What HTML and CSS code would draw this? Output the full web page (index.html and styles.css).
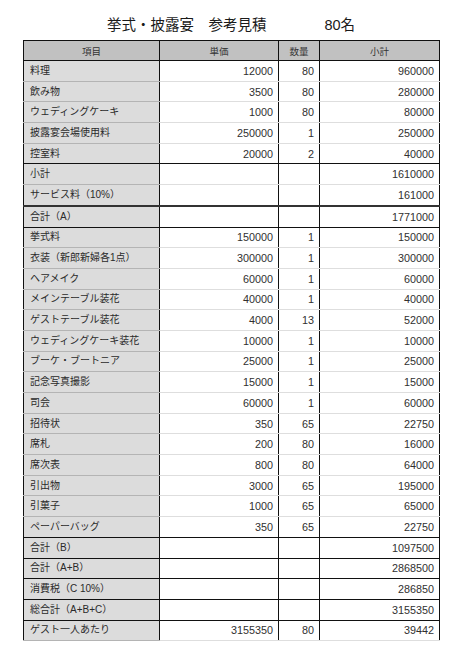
FILE: index.html
```html
<!DOCTYPE html>
<html lang="ja">
<head>
<meta charset="utf-8">
<title>挙式・披露宴 参考見積</title>
<link rel="stylesheet" href="styles.css">
</head>
<body>
<div class="page">
  <h1 class="title"><span>挙式・披露宴　参考見積</span><span class="count">80名</span></h1>
  <table class="est">
    <colgroup>
      <col class="c-item"><col class="c-price"><col class="c-qty"><col class="c-sub">
    </colgroup>
    <thead>
      <tr><th>項目</th><th>単価</th><th>数量</th><th>小計</th></tr>
    </thead>
    <tbody>
      <tr><td class="item">料理</td><td class="num">12000</td><td class="num">80</td><td class="num">960000</td></tr>
      <tr><td class="item">飲み物</td><td class="num">3500</td><td class="num">80</td><td class="num">280000</td></tr>
      <tr><td class="item">ウェディングケーキ</td><td class="num">1000</td><td class="num">80</td><td class="num">80000</td></tr>
      <tr><td class="item">披露宴会場使用料</td><td class="num">250000</td><td class="num">1</td><td class="num">250000</td></tr>
      <tr class="sep"><td class="item">控室料</td><td class="num">20000</td><td class="num">2</td><td class="num">40000</td></tr>
      <tr><td class="item">小計</td><td class="num"></td><td class="num"></td><td class="num">1610000</td></tr>
      <tr class="sep-thick"><td class="item">サービス料（10%）</td><td class="num"></td><td class="num"></td><td class="num">161000</td></tr>
      <tr class="sep"><td class="item">合計（A）</td><td class="num"></td><td class="num"></td><td class="num">1771000</td></tr>
      <tr><td class="item">挙式料</td><td class="num">150000</td><td class="num">1</td><td class="num">150000</td></tr>
      <tr><td class="item">衣装（新郎新婦各1点）</td><td class="num">300000</td><td class="num">1</td><td class="num">300000</td></tr>
      <tr><td class="item">ヘアメイク</td><td class="num">60000</td><td class="num">1</td><td class="num">60000</td></tr>
      <tr><td class="item">メインテーブル装花</td><td class="num">40000</td><td class="num">1</td><td class="num">40000</td></tr>
      <tr><td class="item">ゲストテーブル装花</td><td class="num">4000</td><td class="num">13</td><td class="num">52000</td></tr>
      <tr><td class="item">ウェディングケーキ装花</td><td class="num">10000</td><td class="num">1</td><td class="num">10000</td></tr>
      <tr><td class="item">ブーケ・ブートニア</td><td class="num">25000</td><td class="num">1</td><td class="num">25000</td></tr>
      <tr><td class="item">記念写真撮影</td><td class="num">15000</td><td class="num">1</td><td class="num">15000</td></tr>
      <tr><td class="item">司会</td><td class="num">60000</td><td class="num">1</td><td class="num">60000</td></tr>
      <tr><td class="item">招待状</td><td class="num">350</td><td class="num">65</td><td class="num">22750</td></tr>
      <tr><td class="item">席札</td><td class="num">200</td><td class="num">80</td><td class="num">16000</td></tr>
      <tr><td class="item">席次表</td><td class="num">800</td><td class="num">80</td><td class="num">64000</td></tr>
      <tr><td class="item">引出物</td><td class="num">3000</td><td class="num">65</td><td class="num">195000</td></tr>
      <tr><td class="item">引菓子</td><td class="num">1000</td><td class="num">65</td><td class="num">65000</td></tr>
      <tr class="sep"><td class="item">ペーパーバッグ</td><td class="num">350</td><td class="num">65</td><td class="num">22750</td></tr>
      <tr class="sep"><td class="item">合計（B）</td><td class="num"></td><td class="num"></td><td class="num">1097500</td></tr>
      <tr class="sep"><td class="item">合計（A+B）</td><td class="num"></td><td class="num"></td><td class="num">2868500</td></tr>
      <tr class="sep"><td class="item">消費税（C 10%）</td><td class="num"></td><td class="num"></td><td class="num">286850</td></tr>
      <tr class="sep"><td class="item">総合計（A+B+C）</td><td class="num"></td><td class="num"></td><td class="num">3155350</td></tr>
      <tr><td class="item">ゲスト一人あたり</td><td class="num">3155350</td><td class="num">80</td><td class="num">39442</td></tr>
    </tbody>
  </table>
</div>
</body>
</html>
```

FILE: styles.css
```css
html, body {
  margin: 0;
  padding: 0;
  background: #ffffff;
}

body {
  font-family: "Liberation Sans", "Noto Sans CJK JP", sans-serif;
  color: #222222;
}

.page {
  width: 458px;
  height: 660px;
  padding-top: 11px;
  box-sizing: border-box;
}

.title {
  margin: 0;
  height: 29px;
  display: flex;
  justify-content: center;
  gap: 58px;
  font-weight: normal;
  font-size: 14.5px;
  line-height: 29px;
  color: #1a1a1a;
  padding-left: 4px;
}

.est {
  margin-left: 23px;
  width: 416px;
  border-collapse: collapse;
  table-layout: fixed;
  border: 1.5px solid #111111;
  font-size: 10px;
}

.c-item { width: 136px; }
.c-price { width: 119px; }
.c-qty { width: 41px; }
.c-sub { width: 120px; }

.est th {
  height: 19px;
  background: #c1c1c1;
  font-weight: normal;
  font-family: "Noto Sans CJK JP", sans-serif;
  font-size: 9.5px;
  line-height: 12px;
  color: #333333;
  border: 1px solid #111111;
  padding: 0;
  text-align: center;
}

.est td {
  height: 19.7px;
  padding: 0 6px;
  line-height: 14px;
  border-left: 1px solid #111111;
  border-right: 1px solid #111111;
  border-bottom: 1px solid #dedede;
  white-space: nowrap;
}

.est td.item {
  background: #dcdcdc;
  border-bottom-color: #b4b4b4;
  color: #2a2a2a;
  font-size: 10px;
}

.est td.num {
  text-align: right;
  font-size: 10.8px;
  padding-right: 5px;
  color: #303030;
}

.est tr.sep td,
.est tr.sep td.item {
  border-bottom: 1px solid #111111;
}

.est tr.sep-thick td,
.est tr.sep-thick td.item {
  border-bottom: 2px solid #333333;
}
```
